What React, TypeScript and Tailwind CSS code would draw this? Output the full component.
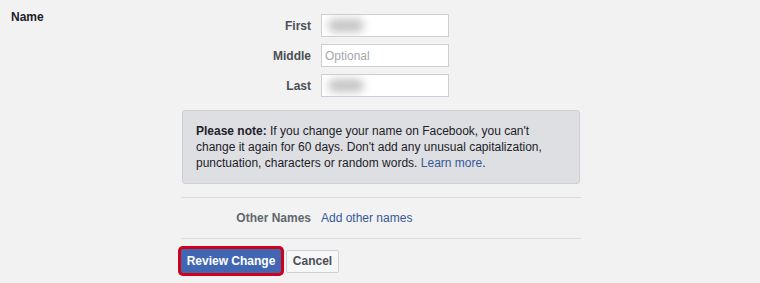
import React from 'react';

const FONT = "font-['Liberation_Sans',Arial,sans-serif]";

function NameInput({ label, placeholder, blur }: { label: string; placeholder?: string; blur?: boolean }) {
  return (
    <div className="flex items-center">
      <label className="w-[140px] pr-[10px] text-right text-[12px] font-bold text-[#4b4f56] leading-[16px]">
        {label}
      </label>
      <div className="relative w-[128px] h-[23px] bg-white border border-[#ccd0d5] flex items-center px-[3px] overflow-hidden">
        {placeholder && <span className="text-[12px] text-[#a3a7ae]">{placeholder}</span>}
        {blur && (
          <span className="ml-[3px] w-[36px] h-[13px] rounded-full bg-[#c4c4c4] blur-[4px]" />
        )}
      </div>
    </div>
  );
}

export default function App() {
  return (
    <div className={`w-[760px] h-[283px] bg-[#f2f2f2] ${FONT} text-[#1d2129] overflow-hidden`}>
      <div className="flex">
        <div className="w-[181px] pl-[11px] pt-[9px] text-[12px] font-bold leading-[16px] text-[#1d2129]">
          Name
        </div>
        <div className="w-[400px] pt-[14px]">
          <div className="flex flex-col gap-[7px]">
            <NameInput label="First" blur />
            <NameInput label="Middle" placeholder="Optional" />
            <NameInput label="Last" blur />
          </div>

          <div className="mt-[13px] ml-[1px] w-[398px] rounded-[3px] border border-[#ccd0d5] bg-[#dddfe2] px-[13px] py-[12px] text-[12px] leading-[16px] text-[#1d2129]">
            <span className="font-bold">Please note:</span> If you change your name on Facebook, you can't
            change it again for 60 days. Don't add any unusual capitalization, punctuation, characters or
            random words. <span className="text-[#365899]">Learn more</span>.
          </div>

          <div className="mt-[13px] border-t border-[#dadde1]" />
          <div className="flex items-center py-[12px] text-[12px] leading-[16px]">
            <span className="w-[140px] pr-[10px] text-right font-bold text-[#606770]">Other Names</span>
            <span className="text-[#365899]">Add other names</span>
          </div>
          <div className="border-t border-[#dadde1]" />

          <div className="mt-[10px] flex items-center gap-[5px]">
            <button className="h-[24px] w-[100px] rounded-[2px] bg-[#4267b2] border border-[#4267b2] text-[12px] font-bold text-white ring-[3px] ring-[#d0021b]">
              Review Change
            </button>
            <button className="h-[23px] w-[53px] rounded-[2px] bg-[#f6f7f9] border border-[#ced0d4] text-[12px] font-bold text-[#4b4f56]">
              Cancel
            </button>
          </div>
        </div>
      </div>
    </div>
  );
}
